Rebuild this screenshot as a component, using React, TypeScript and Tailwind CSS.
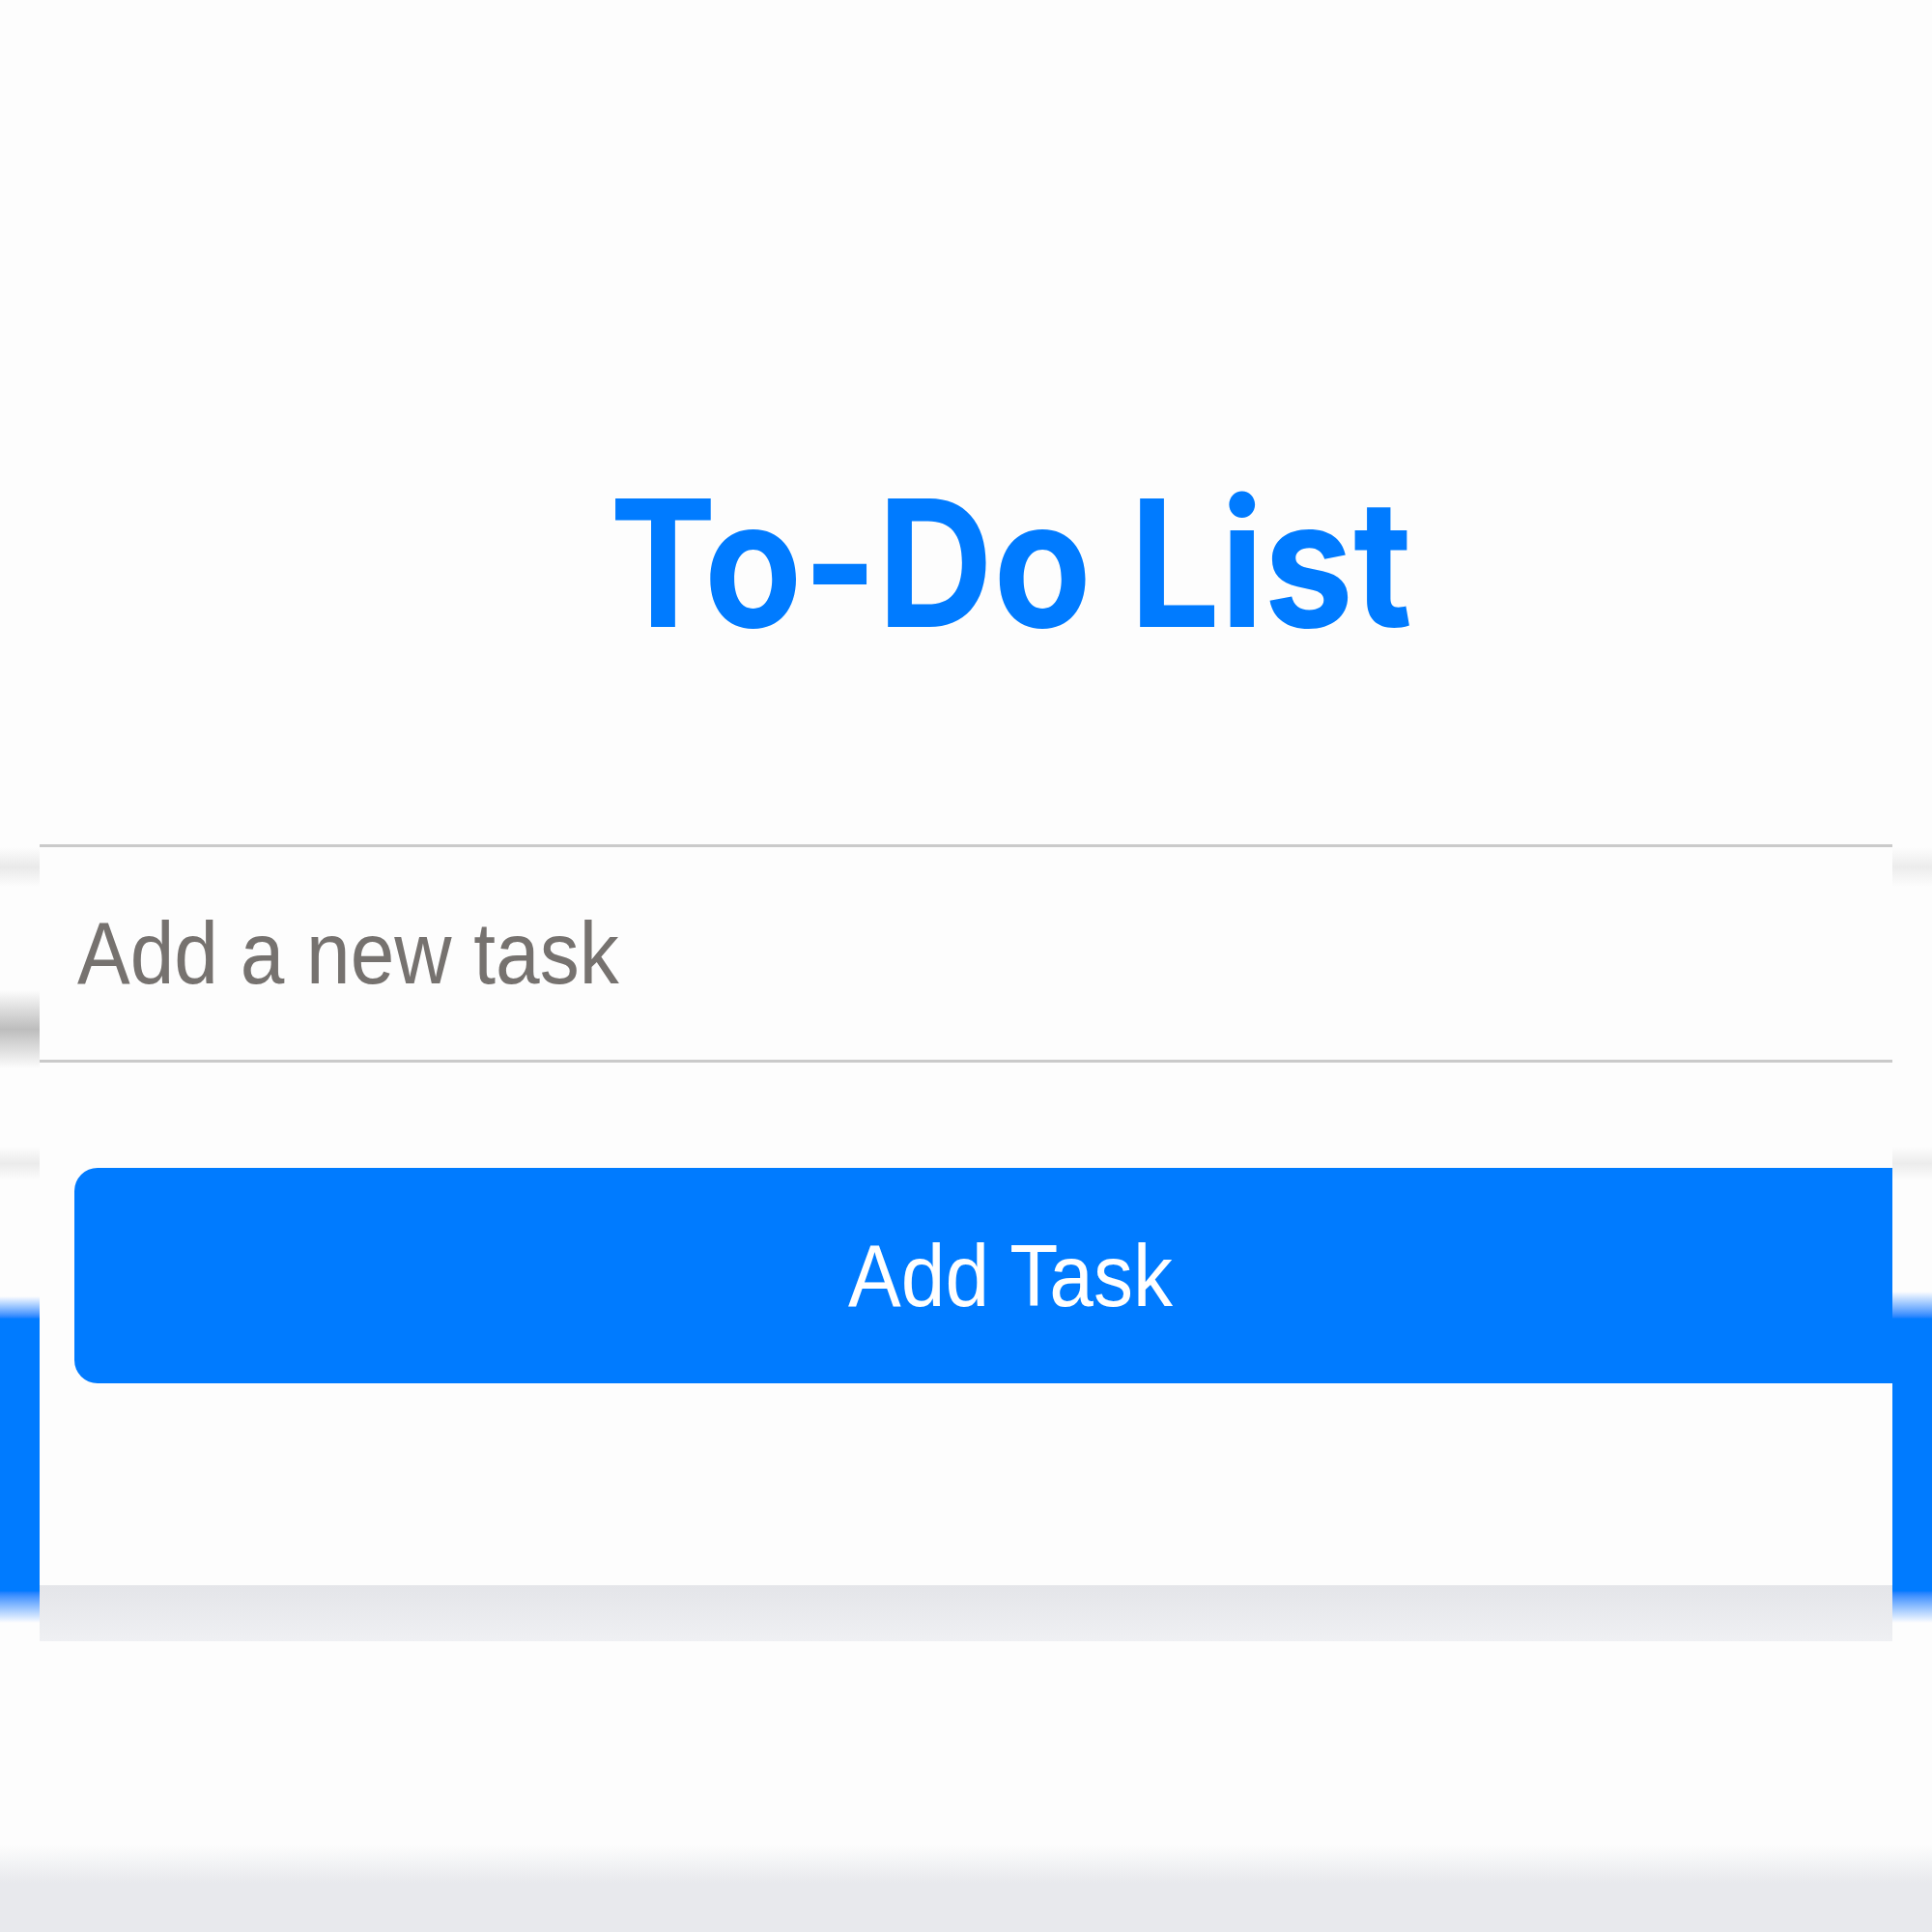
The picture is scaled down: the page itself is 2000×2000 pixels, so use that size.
import React from "react";

function LeftStrip() {
  return (
    <div className="w-[41px] shrink-0 flex flex-col">
      <div className="h-[877px]" />
      <div className="h-[41px] bg-gradient-to-b from-[#fdfdfd] via-[#e9e9e9] to-[#fdfdfd]" />
      <div className="h-[107px]" />
      <div className="h-[81px] bg-gradient-to-b from-[#fdfdfd] via-[#bdbdbd] to-[#fdfdfd]" />
      <div className="h-[81px]" />
      <div className="h-[35px] bg-gradient-to-b from-[#fdfdfd] via-[#ebebeb] to-[#fdfdfd]" />
      <div className="h-[120px]" />
      <div className="h-[23px] bg-gradient-to-b from-[#fdfdfd] to-[#007bff]" />
      <div className="h-[282px] bg-[#007bff]" />
      <div className="h-[33px] bg-gradient-to-b from-[#007bff] to-[#fdfdfd]" />
    </div>
  );
}

function RightStrip() {
  return (
    <div className="w-[41px] shrink-0 flex flex-col">
      <div className="h-[877px]" />
      <div className="h-[41px] bg-gradient-to-b from-[#fdfdfd] via-[#ececec] to-[#fdfdfd]" />
      <div className="h-[269px]" />
      <div className="h-[35px] bg-gradient-to-b from-[#fdfdfd] via-[#ececec] to-[#fdfdfd]" />
      <div className="h-[115px]" />
      <div className="h-[28px] bg-gradient-to-b from-[#fdfdfd] to-[#007bff]" />
      <div className="h-[282px] bg-[#007bff]" />
      <div className="h-[33px] bg-gradient-to-b from-[#007bff] to-[#fdfdfd]" />
    </div>
  );
}

export default function App() {
  return (
    <div className="w-[2000px] h-[2000px] bg-[#fdfdfd] flex flex-col overflow-hidden">
      <div className="flex h-[1699px] shrink-0">
        <LeftStrip />
        <div className="w-[1918px] shrink-0 flex flex-col overflow-hidden bg-[#fdfdfd]">
          <div className="h-[874px] shrink-0 pt-[492px] pl-[590px]">
            <h1
              className="inline-block origin-top scale-y-[1.1] text-[166px] leading-none font-bold text-[#007bff] whitespace-nowrap"
              style={{ fontFamily: "Inter, 'Noto Sans', sans-serif" }}
            >
              To-Do List
            </h1>
          </div>
          <div className="h-[226px] shrink-0 border-y-[3px] border-[#cacaca] flex">
            <input
              type="text"
              placeholder="Add a new task"
              className="w-full h-full scale-y-[1.1] bg-transparent outline-none pl-[39px] text-[82px] placeholder:text-[#76726f] text-[#333]"
              style={{ fontFamily: "'Liberation Sans', Arial, sans-serif" }}
            />
          </div>
          <div className="h-[109px] shrink-0" />
          <div className="h-[223px] shrink-0 pl-[36px] flex">
            <button
              className="w-[1938px] shrink-0 h-full rounded-[24px] bg-[#007bff] text-white text-[82px] flex items-center justify-center"
              style={{ fontFamily: "'Liberation Sans', Arial, sans-serif" }}
            >
              <span className="inline-block scale-y-[1.1]">Add Task</span>
            </button>
          </div>
          <div className="h-[209px] shrink-0" />
          <div className="h-[58px] shrink-0 bg-gradient-to-b from-[#e4e5e9] to-[#eff0f3]" />
        </div>
        <RightStrip />
      </div>
      <div className="h-[210px] shrink-0" />
      <div className="h-[40px] shrink-0 bg-gradient-to-b from-[#fdfdfd] to-[#e8e9ed]" />
      <div className="flex-1 bg-[#e8e9ed]" />
    </div>
  );
}
